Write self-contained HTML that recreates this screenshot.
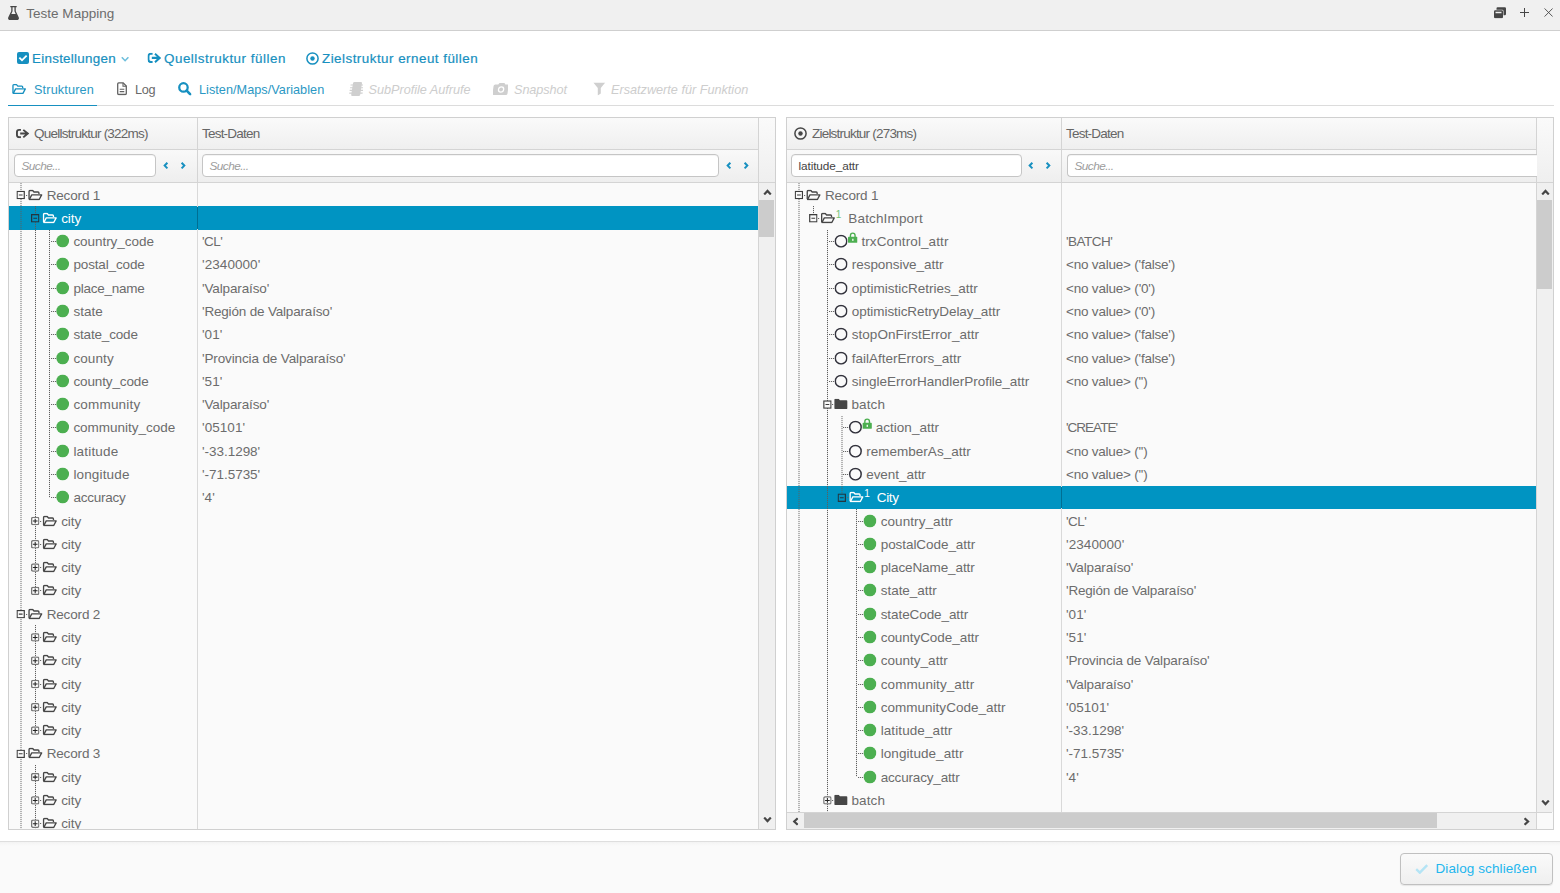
<!DOCTYPE html>
<html lang="de"><head><meta charset="utf-8"><title>Teste Mapping</title>
<style>
html,body{margin:0;padding:0}
body{width:1560px;height:893px;overflow:hidden;background:#fff;position:relative;font-family:"Liberation Sans",sans-serif;font-size:13.5px;color:#666}
.t{position:absolute;white-space:pre;line-height:18px}
.i{position:absolute;overflow:visible;fill:currentColor;color:#464646}
.i.blue{color:#1790c0}.i.lblue{color:#6fbfdc;--sw:1.600}.i.dark{color:#464646}.i.dis{color:#cfcfcf}.i.green{color:#4caf50}.i.w{color:#fff}.i.lblue2{color:#b4e4f5}
.blue{color:#1790c0}
#titlebar{position:absolute;left:0;top:0;width:1560px;height:30px;background:#f0f0f0;border-bottom:1px solid #cfcfcf}
.title{font-size:13.5px;color:#6c6c6c}
.tb{font-size:13.4px;color:#1790c0;-webkit-text-stroke:.2px #1790c0}
.tab{font-size:12.7px;color:#6a6a6a}
.tab.blue{color:#2b98c4}
.tab.dis{color:#cdcdcd;font-style:italic}
#tabline{position:absolute;left:8px;top:105px;width:1546px;height:1px;background:#dcdcdc}
#tabactive{position:absolute;left:8px;top:105px;width:89px;height:1px;background:#1790c0}
.panel{position:absolute;top:117px;height:711px;border:1px solid #d0d0d0;background:#fafafa;overflow:hidden}
.hdr{position:absolute;top:0;height:31px;background:linear-gradient(#fafafa,#efefef);border-bottom:1px solid #d4d4d4}
.hdrcorner{position:absolute;top:0;height:64px;background:linear-gradient(#fafafa,#efefef);border-left:1px solid #d4d4d4;border-bottom:1px solid #d4d4d4;box-sizing:border-box;height:65px}
.filt{position:absolute;top:32px;height:32px;background:linear-gradient(#f9f9f9,#eee);border-bottom:1px solid #d4d4d4}
.hd{font-size:13.5px;color:#666}
.inp{position:absolute;height:21px;border:1px solid #c5c5c5;border-radius:4px;background:#fff;box-shadow:inset 0 1px 0 #f4f4f4}
.inp span{position:absolute;left:6.5px;top:3px;font-size:11.8px;line-height:16px;white-space:pre}
.inp .ph{font-style:italic;color:#9c9c9c;letter-spacing:-.55px}
.inp .val{color:#444;letter-spacing:-.1px}
.body{position:absolute;background:#fafafa;overflow:hidden}
.sel{position:absolute;left:0;right:0;background:#0094c2}
.cdiv{position:absolute;top:0;bottom:0;width:1px;background:#d9d9d9}
.hdiv{position:absolute;top:0;height:64px;width:1px;background:#d4d4d4}
.seldiv{position:absolute;width:1px;background:#006f93}
.vl{position:absolute;width:1px;background-image:linear-gradient(#5e5e5e 50%,rgba(85,85,85,.12) 50%);background-size:1px 2px}
.hl{position:absolute;height:1px;background-image:linear-gradient(90deg,#666 50%,rgba(85,85,85,.15) 50%);background-size:2px 1px}
.gc{position:absolute;width:13px;height:13px;border-radius:50%;background:#4caf50;transform:translateX(.5px)}
.oc{position:absolute;width:9.1px;height:9.1px;border-radius:50%;border:1.7px solid #3e3e3e}
.tr{font-size:13.5px;color:#6c6c6c}
.tr.w,.sup.w{color:#fff}
.sup{font-size:10px;color:#74c277;line-height:12px}
.vsb{position:absolute;background:#f0f0f0;border-left:1px solid #d4d4d4}
.hsb{position:absolute;background:#f0f0f0;border-top:1px solid #d4d4d4;box-sizing:border-box}
.hsbcorner{position:absolute;background:#fafafa;border-left:1px solid #d4d4d4;border-top:1px solid #d4d4d4;box-sizing:border-box}
.thumb{position:absolute;background:#cccccc}
#footer{position:absolute;left:0;top:841px;width:1560px;height:52px;background:linear-gradient(#f3f3f3,#fafafa 4px);border-top:1px solid #dedede;box-sizing:border-box}
#btn{position:absolute;left:1400px;top:11px;width:151px;height:30px;border:1px solid #c0c0c0;border-radius:4px;background:linear-gradient(#fafafa,#efefef);box-shadow:0 1px 1px rgba(0,0,0,.08)}
.btnt{font-size:13.5px;color:#22b6ee}
.i.exp{color:#3c3c3c}
.i.exp.w{color:#233640;--bg:#0094c2}
.vl2{width:2px;opacity:.45}
.i.oc2{color:#33333d}
.hl2{position:absolute;height:1px;background:#7a7a7a}
.i.grey{color:#626262}

</style></head>
<body>
<svg width="0" height="0" style="position:absolute">
<symbol id="flask" viewBox="0 0 11 14"><path d="M2.300.6h6.400M3.900.6v4.600L.9 11.600c-.4 1 .1 1.800 1.100 1.800h7c1 0 1.500-.8 1.100-1.800L7.100 5.200V.6" stroke="currentColor" stroke-width="1.300" fill="none"/><path d="M2.600 8h5.800l1.800 4.200c.2.600-.1 1.200-.8 1.200H1.600c-.7 0-1-.6-.8-1.200z"/></symbol>
<symbol id="restore" viewBox="0 0 12 11"><path d="M3.500 0h7.300Q12 0 12 1.200v5.600Q12 8 10.800 8H9.500V3.800Q9.500 2.500 8.200 2.500H2.500V1.200Q2.500 0 3.500 0z"/><path d="M1.200 3h6.600Q9 3 9 4.200v5.600Q9 11 7.800 11H1.200Q0 11 0 9.800V4.200Q0 3 1.200 3zM1.500 4.600v1.300h6V4.600z" fill-rule="evenodd"/></symbol>
<symbol id="plus" viewBox="0 0 9 9"><path d="M4.500 0v9M0 4.500h9" stroke="currentColor" stroke-width="1" fill="none"/></symbol>
<symbol id="xclose" viewBox="0 0 10 10"><path d="M.5.5l9 9M9.500.5l-9 9" stroke="currentColor" stroke-width="1" fill="none"/></symbol>
<symbol id="checksq" viewBox="0 0 12 12"><path d="M2 0h8a2 2 0 0 1 2 2v8a2 2 0 0 1-2 2H2a2 2 0 0 1-2-2V2a2 2 0 0 1 2-2zM5 9.600l5.300-5.300-1.300-1.300L5 7 3 5 1.700 6.300z" fill-rule="evenodd"/></symbol>
<symbol id="angledown" viewBox="0 0 9 6"><path d="M1.200.6l3.300 3.500L7.800.6" stroke="currentColor" stroke-width="var(--sw,2.200)" fill="none"/></symbol>
<symbol id="angleup" viewBox="0 0 9 6"><path d="M1.200 5.400l3.300-3.500 3.300 3.500" stroke="currentColor" stroke-width="2.200" fill="none"/></symbol>
<symbol id="anglel" viewBox="0 0 6 9"><path d="M5.400 1.200L1.900 4.500l3.500 3.300" stroke="currentColor" stroke-width="2.200" fill="none"/></symbol>
<symbol id="angler" viewBox="0 0 6 9"><path d="M.6 1.200l3.500 3.300L.6 7.800" stroke="currentColor" stroke-width="2.200" fill="none"/></symbol>
<symbol id="chevl" viewBox="0 0 6 9"><path d="M5 1.200L1.800 4.500 5 7.800" stroke="currentColor" stroke-width="2.400" fill="none"/></symbol>
<symbol id="chevr" viewBox="0 0 6 9"><path d="M1 1.200l3.200 3.300L1 7.800" stroke="currentColor" stroke-width="2.400" fill="none"/></symbol>
<symbol id="signout" viewBox="0 0 14 10" preserveAspectRatio="none"><path d="M5.200 1H3.400Q1 1 1 3.400v3.200Q1 9 3.400 9H5.200" stroke="currentColor" stroke-width="2" fill="none"/><path d="M8.300.2L14 5 8.300 9.800 7 8.400 9.600 6.100H4.400V3.900H9.600L7 1.600z"/></symbol>
<symbol id="dotcircle" viewBox="0 0 13 13"><circle cx="6.500" cy="6.500" r="5.600" stroke="currentColor" stroke-width="1.500" fill="none"/><circle cx="6.500" cy="6.500" r="2.200"/></symbol>
<symbol id="folderopen" viewBox="0 0 16 12"><path d="M1 10.500V2Q1 1 2 1h3l1.500 1.700H11q1 0 1 1V5" stroke="currentColor" stroke-width="1.500" fill="none" stroke-linejoin="round"/><path d="M1.300 11L4 5.800h11L12.300 11z" stroke="currentColor" stroke-width="1.500" fill="none" stroke-linejoin="round"/></symbol>
<symbol id="foldersolid" viewBox="0 0 14 11"><path d="M1 0h3.600L6 1.500h6.800Q14 1.500 14 2.700v7.100Q14 11 12.800 11H1.200Q0 11 0 9.800V1Q0 0 1 0z"/></symbol>
<symbol id="filetext" viewBox="0 0 10 13"><path d="M1.700.7h4.500l3.100 3.100v7.500q0 1-1 1H1.700q-1 0-1-1V1.700q0-1 1-1z" stroke="currentColor" stroke-width="1.300" fill="none"/><path d="M6 .7v3.300h3.300M2.700 7h4.600M2.700 9.400h4.600" stroke="currentColor" stroke-width="1.100" fill="none"/></symbol>
<symbol id="search" viewBox="0 0 13 13"><circle cx="5.300" cy="5.300" r="4.100" stroke="currentColor" stroke-width="2.200" fill="none"/><path d="M8.400 8.400l3.600 3.600" stroke="currentColor" stroke-width="2.600" stroke-linecap="round"/></symbol>
<symbol id="chip" viewBox="0 0 15 14"><g transform="skewX(-9) translate(2.200 0)"><rect x="3" y="0" width="9" height="14" rx="1.300"/><path d="M.8 3h13.400M.8 5.700h13.400M.8 8.400h13.400M.8 11.100h13.400" stroke="currentColor" stroke-width="1.100"/></g></symbol>
<symbol id="camera" viewBox="0 0 15 12"><g transform="skewX(-8) translate(1 0)"><path d="M2.200 1.500h2.300L5.500 0h5l1 1.500h2Q15 1.500 15 3v7.500Q15 12 13.500 12h-12Q0 12 0 10.500V3Q0 1.500 1.500 1.500zM8 3.300a3.200 3.200 0 1 0 0 6.400 3.200 3.200 0 0 0 0-6.400z" fill-rule="evenodd"/><circle cx="8" cy="6.500" r="1.900"/></g></symbol>
<symbol id="filter" viewBox="0 0 12 13"><path d="M0 0h12L7.500 5.500V11l-3 2V5.500z"/></symbol>
<symbol id="minus" viewBox="0 0 9 9"><rect x=".6" y=".6" width="7.800" height="7.800" stroke="currentColor" stroke-width="1.400" fill="var(--bg,#fafafa)"/><path d="M2.500 4.500h4" stroke="currentColor" stroke-width="1.100"/></symbol>
<symbol id="plusbox" viewBox="0 0 9 9"><rect x=".6" y=".6" width="7.800" height="7.800" rx="1.700" stroke="#777" stroke-width="1.500" fill="#fafafa"/><path d="M2 4.500h5M4.500 2v5" stroke="#222" stroke-width="1.100"/></symbol>
<symbol id="lock" viewBox="0 0 9 10"><path d="M2.300 4.500V3a2.200 2.200 0 0 1 4.400 0v1.500" stroke="currentColor" stroke-width="1.300" fill="none"/><rect x="0" y="4.300" width="9" height="5.700" rx=".8"/><rect x="4" y="6.200" width="1.200" height="2" fill="#fff"/></symbol>
<symbol id="check" viewBox="0 0 13 10"><path d="M1 5.200l3.600 3.500L12 1.200" stroke="currentColor" stroke-width="2.400" fill="none"/></symbol>
<symbol id="circleo" viewBox="0 0 13 13"><circle cx="6.500" cy="6.500" r="5.700" stroke="currentColor" stroke-width="1.500" fill="none"/></symbol>
<symbol id="gcirc" viewBox="0 0 13 13"><circle cx="6.500" cy="6.500" r="6.500"/></symbol>
</svg>
<div id="titlebar"><svg class="i " style="left:8px;top:6px;width:11px;height:14px"><use href="#flask"/></svg><span class="t title" style="left:26.3px;top:4.5px;letter-spacing:0.01px">Teste Mapping</span><svg class="i " style="left:1494px;top:7px;width:12px;height:11.5px"><use href="#restore"/></svg><svg class="i " style="left:1520px;top:8px;width:9px;height:9px"><use href="#plus"/></svg><svg class="i " style="left:1544px;top:8px;width:9px;height:9px;transform:translate(0.1px,0px)"><use href="#xclose"/></svg></div>
<div id="toolbar"><svg class="i blue" style="left:17px;top:52px;width:12px;height:12px"><use href="#checksq"/></svg><span class="t tb" style="left:32px;top:49.6px;letter-spacing:0.27px">Einstellungen</span><svg class="i lblue" style="left:120px;top:56px;width:9px;height:6px;transform:translate(0.6px,0.6px)"><use href="#angledown"/></svg><svg class="i blue" style="left:147px;top:52px;width:13.7px;height:10.3px;transform:translate(0.5px,0.8px)"><use href="#signout"/></svg><span class="t tb" style="left:164px;top:49.6px;letter-spacing:0.51px">Quellstruktur füllen</span><svg class="i blue" style="left:306px;top:52px;width:13px;height:13px"><use href="#dotcircle"/></svg><span class="t tb" style="left:322px;top:49.6px;letter-spacing:0.48px">Zielstruktur erneut füllen</span></div>
<div id="tabs"><svg class="i blue" style="left:11px;top:83px;width:15.3px;height:10.6px;transform:translate(0.5px,0.7px)"><use href="#folderopen"/></svg><span class="t tab blue" style="left:34px;top:81px;letter-spacing:0.14px">Strukturen</span><svg class="i grey" style="left:117px;top:82px;width:10px;height:13.4px"><use href="#filetext"/></svg><span class="t tab" style="left:135px;top:81px;letter-spacing:-0.31px">Log</span><svg class="i blue" style="left:178px;top:82px;width:13.4px;height:13.4px"><use href="#search"/></svg><span class="t tab blue" style="left:199px;top:81px;letter-spacing:0.03px">Listen/Maps/Variablen</span><svg class="i dis" style="left:348px;top:82px;width:15px;height:14px"><use href="#chip"/></svg><span class="t tab dis" style="left:368.5px;top:81px;letter-spacing:-0.02px">SubProfile Aufrufe</span><svg class="i dis" style="left:493px;top:83px;width:15px;height:12px"><use href="#camera"/></svg><span class="t tab dis" style="left:514px;top:81px;letter-spacing:-0.08px">Snapshot</span><svg class="i dis" style="left:592px;top:82px;width:13.4px;height:13px;transform:translate(0.6px,0.6px)"><use href="#filter"/></svg><span class="t tab dis" style="left:611px;top:81px;letter-spacing:-0.01px">Ersatzwerte für Funktion</span><div id="tabline"></div><div id="tabactive"></div></div>
<div class="panel" id="pl" style="left:8px;width:766px"><div class="hdr" style="left:0;width:749px"></div><div class="hdrcorner" style="left:749px;width:17px"></div><div class="filt" style="left:0;width:749px"></div><div class="hdiv" style="left:188px"></div><svg class="i dark" style="left:7px;top:11px;width:13.3px;height:9.2px"><use href="#signout"/></svg><span class="t hd" style="left:25px;top:7px;letter-spacing:-0.76px">Quellstruktur (322ms)</span><span class="t hd" style="left:193px;top:7px;letter-spacing:-0.79px">Test-Daten</span><div class="inp" style="left:5px;top:36px;width:140px"><span class="ph">Suche...</span></div><svg class="i blue" style="left:154px;top:43px;width:5.4px;height:7.6px;transform:translate(0px,0.8px)"><use href="#chevl"/></svg><svg class="i blue" style="left:171px;top:43px;width:5.4px;height:7.6px;transform:translate(0.6px,0.8px)"><use href="#chevr"/></svg><div class="inp" style="left:193px;top:36px;width:515px;"><span class="ph">Suche...</span></div><svg class="i blue" style="left:717px;top:43px;width:5.4px;height:7.6px;transform:translate(0px,0.8px)"><use href="#chevl"/></svg><svg class="i blue" style="left:734px;top:43px;width:5.4px;height:7.6px;transform:translate(0.6px,0.8px)"><use href="#chevr"/></svg><div class="body" style="left:0;top:65px;width:749px;height:646px"><div class="sel" style="top:23px;height:24px"></div><div class="cdiv" style="left:188px"></div><div class="seldiv" style="left:188px;top:24px;height:22px"></div><div class="vl vl2" style="left:11px;top:0px;height:652px"></div><div class="vl" style="left:26px;top:23px;height:385px"></div><div class="vl" style="left:26px;top:442px;height:106px"></div><div class="vl" style="left:26px;top:582px;height:70px"></div><div class="vl" style="left:40px;top:47px;height:268px"></div><svg class="i exp" style="left:7px;top:7px;width:8.4px;height:8.4px;transform:translate(0.5px,0.8px)"><use href="#minus"/></svg><div class="hl" style="left:16.7px;top:12px;width:2px"></div><svg class="i dark" style="left:18px;top:6px;width:15.3px;height:10.8px;transform:translate(0.7px,0.6px)"><use href="#folderopen"/></svg><span class="t tr" style="left:37.7px;top:3.5px;letter-spacing:-0.16px">Record 1</span><svg class="i exp w" style="left:22px;top:31px;width:8.4px;height:8.4px;transform:translate(0.0px,0.09px)"><use href="#minus"/></svg><div class="hl" style="left:31.200000000000003px;top:35px;width:2px"></div><svg class="i dark w" style="left:33px;top:29px;width:15.3px;height:10.8px;transform:translate(0.2px,0.6px)"><use href="#folderopen"/></svg><span class="t tr w" style="left:52.2px;top:26.5px;letter-spacing:-0.09px">city</span><div class="hl" style="left:42px;top:58px;width:6px"></div><svg class="i green" style="left:47px;top:51px;width:12.9px;height:12.9px;transform:translate(0.2px,0.5px)"><use href="#gcirc"/></svg><span class="t tr" style="left:64.4px;top:49.5px;letter-spacing:-0.05px">country_code</span><span class="t tr" style="left:193px;top:49.5px;letter-spacing:-0.55px">'CL'</span><div class="hl" style="left:42px;top:81px;width:6px"></div><svg class="i green" style="left:47px;top:74px;width:12.9px;height:12.9px;transform:translate(0.2px,0.5px)"><use href="#gcirc"/></svg><span class="t tr" style="left:64.4px;top:72.5px;letter-spacing:-0.14px">postal_code</span><span class="t tr" style="left:193px;top:72.5px;letter-spacing:0.07px">'2340000'</span><div class="hl" style="left:42px;top:105px;width:6px"></div><svg class="i green" style="left:47px;top:98px;width:12.9px;height:12.9px;transform:translate(0.2px,0.5px)"><use href="#gcirc"/></svg><span class="t tr" style="left:64.4px;top:96.5px;letter-spacing:-0.25px">place_name</span><span class="t tr" style="left:193px;top:96.5px;letter-spacing:-0.13px">'Valparaíso'</span><div class="hl" style="left:42px;top:128px;width:6px"></div><svg class="i green" style="left:47px;top:121px;width:12.9px;height:12.9px;transform:translate(0.2px,0.5px)"><use href="#gcirc"/></svg><span class="t tr" style="left:64.4px;top:119.5px;letter-spacing:0.04px">state</span><span class="t tr" style="left:193px;top:119.5px;letter-spacing:-0.18px">'Región de Valparaíso'</span><div class="hl" style="left:42px;top:151px;width:6px"></div><svg class="i green" style="left:47px;top:144px;width:12.9px;height:12.9px;transform:translate(0.2px,0.5px)"><use href="#gcirc"/></svg><span class="t tr" style="left:64.4px;top:142.5px;letter-spacing:-0.17px">state_code</span><span class="t tr" style="left:193px;top:142.5px;letter-spacing:0.04px">'01'</span><div class="hl" style="left:42px;top:175px;width:6px"></div><svg class="i green" style="left:47px;top:168px;width:12.9px;height:12.9px;transform:translate(0.2px,0.5px)"><use href="#gcirc"/></svg><span class="t tr" style="left:64.4px;top:166.5px;letter-spacing:0.11px">county</span><span class="t tr" style="left:193px;top:166.5px;letter-spacing:-0.13px">'Provincia de Valparaíso'</span><div class="hl" style="left:42px;top:198px;width:6px"></div><svg class="i green" style="left:47px;top:191px;width:12.9px;height:12.9px;transform:translate(0.2px,0.5px)"><use href="#gcirc"/></svg><span class="t tr" style="left:64.4px;top:189.5px;letter-spacing:-0.12px">county_code</span><span class="t tr" style="left:193px;top:189.5px;letter-spacing:0.04px">'51'</span><div class="hl" style="left:42px;top:221px;width:6px"></div><svg class="i green" style="left:47px;top:214px;width:12.9px;height:12.9px;transform:translate(0.2px,0.5px)"><use href="#gcirc"/></svg><span class="t tr" style="left:64.4px;top:212.5px;letter-spacing:0.19px">community</span><span class="t tr" style="left:193px;top:212.5px;letter-spacing:-0.13px">'Valparaíso'</span><div class="hl" style="left:42px;top:244px;width:6px"></div><svg class="i green" style="left:47px;top:237px;width:12.9px;height:12.9px;transform:translate(0.2px,0.5px)"><use href="#gcirc"/></svg><span class="t tr" style="left:64.4px;top:235.5px;letter-spacing:-0.02px">community_code</span><span class="t tr" style="left:193px;top:235.5px;letter-spacing:0.06px">'05101'</span><div class="hl" style="left:42px;top:268px;width:6px"></div><svg class="i green" style="left:47px;top:261px;width:12.9px;height:12.9px;transform:translate(0.2px,0.5px)"><use href="#gcirc"/></svg><span class="t tr" style="left:64.4px;top:259.5px;letter-spacing:0.19px">latitude</span><span class="t tr" style="left:193px;top:259.5px;letter-spacing:-0.03px">'-33.1298'</span><div class="hl" style="left:42px;top:291px;width:6px"></div><svg class="i green" style="left:47px;top:284px;width:12.9px;height:12.9px;transform:translate(0.2px,0.5px)"><use href="#gcirc"/></svg><span class="t tr" style="left:64.4px;top:282.5px;letter-spacing:0.15px">longitude</span><span class="t tr" style="left:193px;top:282.5px;letter-spacing:-0.03px">'-71.5735'</span><div class="hl" style="left:42px;top:314px;width:6px"></div><svg class="i green" style="left:47px;top:307px;width:12.9px;height:12.9px;transform:translate(0.2px,0.5px)"><use href="#gcirc"/></svg><span class="t tr" style="left:64.4px;top:305.5px;letter-spacing:-0.22px">accuracy</span><span class="t tr" style="left:193px;top:305.5px;letter-spacing:0.02px">'4'</span><svg class="i exp" style="left:22px;top:333px;width:8.4px;height:8.4px;transform:translate(0.0px,0.8px)"><use href="#plusbox"/></svg><div class="hl" style="left:31.200000000000003px;top:338px;width:2px"></div><svg class="i dark" style="left:33px;top:332px;width:15.3px;height:10.8px;transform:translate(0.2px,0.6px)"><use href="#folderopen"/></svg><span class="t tr" style="left:52.2px;top:329.5px;letter-spacing:-0.09px">city</span><svg class="i exp" style="left:22px;top:357px;width:8.4px;height:8.4px;transform:translate(0.0px,0.09px)"><use href="#plusbox"/></svg><div class="hl" style="left:31.200000000000003px;top:361px;width:2px"></div><svg class="i dark" style="left:33px;top:355px;width:15.3px;height:10.8px;transform:translate(0.2px,0.6px)"><use href="#folderopen"/></svg><span class="t tr" style="left:52.2px;top:352.5px;letter-spacing:-0.09px">city</span><svg class="i exp" style="left:22px;top:380px;width:8.4px;height:8.4px;transform:translate(0.0px,0.37px)"><use href="#plusbox"/></svg><div class="hl" style="left:31.200000000000003px;top:384px;width:2px"></div><svg class="i dark" style="left:33px;top:378px;width:15.3px;height:10.8px;transform:translate(0.2px,0.6px)"><use href="#folderopen"/></svg><span class="t tr" style="left:52.2px;top:375.5px;letter-spacing:-0.09px">city</span><svg class="i exp" style="left:22px;top:403px;width:8.4px;height:8.4px;transform:translate(0.0px,0.66px)"><use href="#plusbox"/></svg><div class="hl" style="left:31.200000000000003px;top:407px;width:2px"></div><svg class="i dark" style="left:33px;top:401px;width:15.3px;height:10.8px;transform:translate(0.2px,0.6px)"><use href="#folderopen"/></svg><span class="t tr" style="left:52.2px;top:398.5px;letter-spacing:-0.09px">city</span><svg class="i exp" style="left:7px;top:426px;width:8.4px;height:8.4px;transform:translate(0.5px,0.94px)"><use href="#minus"/></svg><div class="hl" style="left:16.7px;top:431px;width:2px"></div><svg class="i dark" style="left:18px;top:425px;width:15.3px;height:10.8px;transform:translate(0.7px,0.6px)"><use href="#folderopen"/></svg><span class="t tr" style="left:37.7px;top:422.5px;letter-spacing:-0.16px">Record 2</span><svg class="i exp" style="left:22px;top:450px;width:8.4px;height:8.4px;transform:translate(0.0px,0.23px)"><use href="#plusbox"/></svg><div class="hl" style="left:31.200000000000003px;top:454px;width:2px"></div><svg class="i dark" style="left:33px;top:448px;width:15.3px;height:10.8px;transform:translate(0.2px,0.6px)"><use href="#folderopen"/></svg><span class="t tr" style="left:52.2px;top:445.5px;letter-spacing:-0.09px">city</span><svg class="i exp" style="left:22px;top:473px;width:8.4px;height:8.4px;transform:translate(0.0px,0.51px)"><use href="#plusbox"/></svg><div class="hl" style="left:31.200000000000003px;top:477px;width:2px"></div><svg class="i dark" style="left:33px;top:471px;width:15.3px;height:10.8px;transform:translate(0.2px,0.6px)"><use href="#folderopen"/></svg><span class="t tr" style="left:52.2px;top:468.5px;letter-spacing:-0.09px">city</span><svg class="i exp" style="left:22px;top:496px;width:8.4px;height:8.4px;transform:translate(0.0px,0.8px)"><use href="#plusbox"/></svg><div class="hl" style="left:31.200000000000003px;top:501px;width:2px"></div><svg class="i dark" style="left:33px;top:495px;width:15.3px;height:10.8px;transform:translate(0.2px,0.6px)"><use href="#folderopen"/></svg><span class="t tr" style="left:52.2px;top:492.5px;letter-spacing:-0.09px">city</span><svg class="i exp" style="left:22px;top:520px;width:8.4px;height:8.4px;transform:translate(0.0px,0.09px)"><use href="#plusbox"/></svg><div class="hl" style="left:31.200000000000003px;top:524px;width:2px"></div><svg class="i dark" style="left:33px;top:518px;width:15.3px;height:10.8px;transform:translate(0.2px,0.6px)"><use href="#folderopen"/></svg><span class="t tr" style="left:52.2px;top:515.5px;letter-spacing:-0.09px">city</span><svg class="i exp" style="left:22px;top:543px;width:8.4px;height:8.4px;transform:translate(0.0px,0.37px)"><use href="#plusbox"/></svg><div class="hl" style="left:31.200000000000003px;top:547px;width:2px"></div><svg class="i dark" style="left:33px;top:541px;width:15.3px;height:10.8px;transform:translate(0.2px,0.6px)"><use href="#folderopen"/></svg><span class="t tr" style="left:52.2px;top:538.5px;letter-spacing:-0.09px">city</span><svg class="i exp" style="left:7px;top:566px;width:8.4px;height:8.4px;transform:translate(0.5px,0.66px)"><use href="#minus"/></svg><div class="hl" style="left:16.7px;top:570px;width:2px"></div><svg class="i dark" style="left:18px;top:564px;width:15.3px;height:10.8px;transform:translate(0.7px,0.6px)"><use href="#folderopen"/></svg><span class="t tr" style="left:37.7px;top:561.5px;letter-spacing:-0.16px">Record 3</span><svg class="i exp" style="left:22px;top:589px;width:8.4px;height:8.4px;transform:translate(0.0px,0.94px)"><use href="#plusbox"/></svg><div class="hl" style="left:31.200000000000003px;top:594px;width:2px"></div><svg class="i dark" style="left:33px;top:588px;width:15.3px;height:10.8px;transform:translate(0.2px,0.6px)"><use href="#folderopen"/></svg><span class="t tr" style="left:52.2px;top:585.5px;letter-spacing:-0.09px">city</span><svg class="i exp" style="left:22px;top:613px;width:8.4px;height:8.4px;transform:translate(0.0px,0.23px)"><use href="#plusbox"/></svg><div class="hl" style="left:31.200000000000003px;top:617px;width:2px"></div><svg class="i dark" style="left:33px;top:611px;width:15.3px;height:10.8px;transform:translate(0.2px,0.6px)"><use href="#folderopen"/></svg><span class="t tr" style="left:52.2px;top:608.5px;letter-spacing:-0.09px">city</span><svg class="i exp" style="left:22px;top:636px;width:8.4px;height:8.4px;transform:translate(0.0px,0.51px)"><use href="#plusbox"/></svg><div class="hl" style="left:31.200000000000003px;top:640px;width:2px"></div><svg class="i dark" style="left:33px;top:634px;width:15.3px;height:10.8px;transform:translate(0.2px,0.6px)"><use href="#folderopen"/></svg><span class="t tr" style="left:52.2px;top:631.5px;letter-spacing:-0.09px">city</span></div><div class="vsb" style="left:749px;top:65px;width:16px;height:646px"><svg class="i dark" style="left:4px;top:6px;width:9px;height:6px"><use href="#angleup"/></svg><svg class="i dark" style="left:4px;top:634px;width:9px;height:6px"><use href="#angledown"/></svg><div class="thumb" style="left:0;top:17px;width:15px;height:37px"></div></div></div>
<div class="panel" id="pr" style="left:786px;width:766px"><div class="hdr" style="left:0;width:749px"></div><div class="hdrcorner" style="left:749px;width:17px"></div><div class="filt" style="left:0;width:749px"></div><div class="hdiv" style="left:274px"></div><svg class="i dark" style="left:7px;top:9px;width:13px;height:13px"><use href="#dotcircle"/></svg><span class="t hd" style="left:25px;top:7px;letter-spacing:-0.79px">Zielstruktur (273ms)</span><span class="t hd" style="left:279px;top:7px;letter-spacing:-0.79px">Test-Daten</span><div class="inp" style="left:4px;top:36px;width:229px"><span class="val">latitude_attr</span></div><svg class="i blue" style="left:241px;top:43px;width:5.4px;height:7.6px;transform:translate(0px,0.8px)"><use href="#chevl"/></svg><svg class="i blue" style="left:258px;top:43px;width:5.4px;height:7.6px;transform:translate(0.6px,0.8px)"><use href="#chevr"/></svg><div class="inp" style="left:280px;top:36px;width:469px;border-right:none;border-radius:4px 0 0 4px;"><span class="ph">Suche...</span></div><div class="body" style="left:0;top:65px;width:749px;height:629px"><div class="sel" style="top:303px;height:23px"></div><div class="cdiv" style="left:274px"></div><div class="seldiv" style="left:274px;top:304px;height:21px"></div><div class="vl vl2" style="left:11px;top:0px;height:652px"></div><div class="vl" style="left:26px;top:23px;height:8px"></div><div class="vl" style="left:40px;top:47px;height:605px"></div><div class="vl vl2" style="left:54px;top:233px;height:78px"></div><div class="vl" style="left:69px;top:326px;height:268px"></div><svg class="i exp" style="left:7px;top:7px;width:8.4px;height:8.4px;transform:translate(0.7px,0.8px)"><use href="#minus"/></svg><div class="hl" style="left:16.899999999999977px;top:12px;width:2px"></div><svg class="i dark" style="left:18px;top:6px;width:15.3px;height:10.8px;transform:translate(0.9px,0.6px)"><use href="#folderopen"/></svg><span class="t tr" style="left:37.89999999999998px;top:3.5px;letter-spacing:-0.16px">Record 1</span><svg class="i exp" style="left:22px;top:31px;width:8.4px;height:8.4px;transform:translate(0.1px,0.09px)"><use href="#minus"/></svg><div class="hl" style="left:31.299999999999955px;top:35px;width:2px"></div><svg class="i dark" style="left:33px;top:29px;width:15.3px;height:10.8px;transform:translate(0.3px,0.6px)"><use href="#folderopen"/></svg><span class="t sup" style="left:48.799999999999955px;top:26.4px">1</span><span class="t tr" style="left:61.299999999999955px;top:26.5px;letter-spacing:0.16px">BatchImport</span><div class="hl" style="left:42px;top:58px;width:6px"></div><svg class="i oc2" style="left:47px;top:51px;width:13.1px;height:13.1px;transform:translate(0.5px,0.6px)"><use href="#circleo"/></svg><svg class="i green" style="left:60px;top:49px;width:9.5px;height:11px;transform:translate(1.0px,0px)"><use href="#lock"/></svg><span class="t tr" style="left:74.39999999999998px;top:49.5px;letter-spacing:0.11px">trxControl_attr</span><span class="t tr" style="left:279px;top:49.5px;letter-spacing:-0.52px">'BATCH'</span><div class="hl" style="left:42px;top:81px;width:6px"></div><svg class="i oc2" style="left:47px;top:74px;width:13.1px;height:13.1px;transform:translate(0.5px,0.6px)"><use href="#circleo"/></svg><span class="t tr" style="left:64.79999999999998px;top:72.5px;letter-spacing:-0.05px">responsive_attr</span><span class="t tr" style="left:279px;top:72.5px;letter-spacing:-0.21px">&lt;no value&gt; ('false')</span><div class="hl" style="left:42px;top:105px;width:6px"></div><svg class="i oc2" style="left:47px;top:98px;width:13.1px;height:13.1px;transform:translate(0.5px,0.6px)"><use href="#circleo"/></svg><span class="t tr" style="left:64.79999999999998px;top:96.5px;letter-spacing:-0.00px">optimisticRetries_attr</span><span class="t tr" style="left:279px;top:96.5px;letter-spacing:-0.20px">&lt;no value&gt; ('0')</span><div class="hl" style="left:42px;top:128px;width:6px"></div><svg class="i oc2" style="left:47px;top:121px;width:13.1px;height:13.1px;transform:translate(0.5px,0.6px)"><use href="#circleo"/></svg><span class="t tr" style="left:64.79999999999998px;top:119.5px;letter-spacing:-0.07px">optimisticRetryDelay_attr</span><span class="t tr" style="left:279px;top:119.5px;letter-spacing:-0.20px">&lt;no value&gt; ('0')</span><div class="hl" style="left:42px;top:151px;width:6px"></div><svg class="i oc2" style="left:47px;top:144px;width:13.1px;height:13.1px;transform:translate(0.5px,0.6px)"><use href="#circleo"/></svg><span class="t tr" style="left:64.79999999999998px;top:142.5px;letter-spacing:0.02px">stopOnFirstError_attr</span><span class="t tr" style="left:279px;top:142.5px;letter-spacing:-0.21px">&lt;no value&gt; ('false')</span><div class="hl" style="left:42px;top:175px;width:6px"></div><svg class="i oc2" style="left:47px;top:168px;width:13.1px;height:13.1px;transform:translate(0.5px,0.6px)"><use href="#circleo"/></svg><span class="t tr" style="left:64.79999999999998px;top:166.5px;letter-spacing:0.00px">failAfterErrors_attr</span><span class="t tr" style="left:279px;top:166.5px;letter-spacing:-0.21px">&lt;no value&gt; ('false')</span><div class="hl" style="left:42px;top:198px;width:6px"></div><svg class="i oc2" style="left:47px;top:191px;width:13.1px;height:13.1px;transform:translate(0.5px,0.6px)"><use href="#circleo"/></svg><span class="t tr" style="left:64.79999999999998px;top:189.5px;letter-spacing:-0.01px">singleErrorHandlerProfile_attr</span><span class="t tr" style="left:279px;top:189.5px;letter-spacing:-0.22px">&lt;no value&gt; ('')</span><svg class="i exp" style="left:36px;top:217px;width:8.4px;height:8.4px;transform:translate(0.2px,0.37px)"><use href="#minus"/></svg><div class="hl" style="left:45.39999999999998px;top:221px;width:2px"></div><svg class="i dark" style="left:47px;top:215px;width:13.6px;height:10.3px;transform:translate(0.1px,0.8px)"><use href="#foldersolid"/></svg><span class="t tr" style="left:64.39999999999998px;top:212.5px;letter-spacing:0.12px">batch</span><div class="hl" style="left:56px;top:244px;width:6px"></div><svg class="i oc2" style="left:61px;top:237px;width:13.1px;height:13.1px;transform:translate(0.9px,0.6px)"><use href="#circleo"/></svg><svg class="i green" style="left:75px;top:235px;width:9.5px;height:11px;transform:translate(0.4px,0px)"><use href="#lock"/></svg><span class="t tr" style="left:88.79999999999995px;top:235.5px;letter-spacing:0.01px">action_attr</span><span class="t tr" style="left:279px;top:235.5px;letter-spacing:-0.99px">'CREATE'</span><div class="hl" style="left:56px;top:268px;width:6px"></div><svg class="i oc2" style="left:61px;top:261px;width:13.1px;height:13.1px;transform:translate(0.9px,0.6px)"><use href="#circleo"/></svg><span class="t tr" style="left:79.19999999999996px;top:259.5px;letter-spacing:0.02px">rememberAs_attr</span><span class="t tr" style="left:279px;top:259.5px;letter-spacing:-0.22px">&lt;no value&gt; ('')</span><div class="hl" style="left:56px;top:291px;width:6px"></div><svg class="i oc2" style="left:61px;top:284px;width:13.1px;height:13.1px;transform:translate(0.9px,0.6px)"><use href="#circleo"/></svg><span class="t tr" style="left:79.19999999999996px;top:282.5px;letter-spacing:-0.04px">event_attr</span><span class="t tr" style="left:279px;top:282.5px;letter-spacing:-0.22px">&lt;no value&gt; ('')</span><svg class="i exp w" style="left:50px;top:310px;width:8.4px;height:8.4px;transform:translate(0.6px,0.51px)"><use href="#minus"/></svg><div class="hl" style="left:59.799999999999955px;top:314px;width:2px"></div><svg class="i dark w" style="left:61px;top:308px;width:15.3px;height:10.8px;transform:translate(0.8px,0.6px)"><use href="#folderopen"/></svg><span class="t sup w" style="left:77.29999999999995px;top:305.4px">1</span><span class="t tr w" style="left:89.79999999999995px;top:305.5px;letter-spacing:-0.35px">City</span><div class="hl" style="left:71px;top:338px;width:6px"></div><svg class="i green" style="left:76px;top:331px;width:12.9px;height:12.9px;transform:translate(0.5px,0.5px)"><use href="#gcirc"/></svg><span class="t tr" style="left:93.69999999999996px;top:329.5px;letter-spacing:0.08px">country_attr</span><span class="t tr" style="left:279px;top:329.5px;letter-spacing:-0.55px">'CL'</span><div class="hl" style="left:71px;top:361px;width:6px"></div><svg class="i green" style="left:76px;top:354px;width:12.9px;height:12.9px;transform:translate(0.5px,0.5px)"><use href="#gcirc"/></svg><span class="t tr" style="left:93.69999999999996px;top:352.5px;letter-spacing:-0.06px">postalCode_attr</span><span class="t tr" style="left:279px;top:352.5px;letter-spacing:0.07px">'2340000'</span><div class="hl" style="left:71px;top:384px;width:6px"></div><svg class="i green" style="left:76px;top:377px;width:12.9px;height:12.9px;transform:translate(0.5px,0.5px)"><use href="#gcirc"/></svg><span class="t tr" style="left:93.69999999999996px;top:375.5px;letter-spacing:-0.10px">placeName_attr</span><span class="t tr" style="left:279px;top:375.5px;letter-spacing:-0.13px">'Valparaíso'</span><div class="hl" style="left:71px;top:407px;width:6px"></div><svg class="i green" style="left:76px;top:400px;width:12.9px;height:12.9px;transform:translate(0.5px,0.5px)"><use href="#gcirc"/></svg><span class="t tr" style="left:93.69999999999996px;top:398.5px;letter-spacing:-0.02px">state_attr</span><span class="t tr" style="left:279px;top:398.5px;letter-spacing:-0.18px">'Región de Valparaíso'</span><div class="hl" style="left:71px;top:431px;width:6px"></div><svg class="i green" style="left:76px;top:424px;width:12.9px;height:12.9px;transform:translate(0.5px,0.5px)"><use href="#gcirc"/></svg><span class="t tr" style="left:93.69999999999996px;top:422.5px;letter-spacing:-0.08px">stateCode_attr</span><span class="t tr" style="left:279px;top:422.5px;letter-spacing:0.04px">'01'</span><div class="hl" style="left:71px;top:454px;width:6px"></div><svg class="i green" style="left:76px;top:447px;width:12.9px;height:12.9px;transform:translate(0.5px,0.5px)"><use href="#gcirc"/></svg><span class="t tr" style="left:93.69999999999996px;top:445.5px;letter-spacing:-0.05px">countyCode_attr</span><span class="t tr" style="left:279px;top:445.5px;letter-spacing:0.04px">'51'</span><div class="hl" style="left:71px;top:477px;width:6px"></div><svg class="i green" style="left:76px;top:470px;width:12.9px;height:12.9px;transform:translate(0.5px,0.5px)"><use href="#gcirc"/></svg><span class="t tr" style="left:93.69999999999996px;top:468.5px;letter-spacing:0.02px">county_attr</span><span class="t tr" style="left:279px;top:468.5px;letter-spacing:-0.13px">'Provincia de Valparaíso'</span><div class="hl" style="left:71px;top:501px;width:6px"></div><svg class="i green" style="left:76px;top:494px;width:12.9px;height:12.9px;transform:translate(0.5px,0.5px)"><use href="#gcirc"/></svg><span class="t tr" style="left:93.69999999999996px;top:492.5px;letter-spacing:0.09px">community_attr</span><span class="t tr" style="left:279px;top:492.5px;letter-spacing:-0.13px">'Valparaíso'</span><div class="hl" style="left:71px;top:524px;width:6px"></div><svg class="i green" style="left:76px;top:517px;width:12.9px;height:12.9px;transform:translate(0.5px,0.5px)"><use href="#gcirc"/></svg><span class="t tr" style="left:93.69999999999996px;top:515.5px;letter-spacing:0.02px">communityCode_attr</span><span class="t tr" style="left:279px;top:515.5px;letter-spacing:0.06px">'05101'</span><div class="hl" style="left:71px;top:547px;width:6px"></div><svg class="i green" style="left:76px;top:540px;width:12.9px;height:12.9px;transform:translate(0.5px,0.5px)"><use href="#gcirc"/></svg><span class="t tr" style="left:93.69999999999996px;top:538.5px;letter-spacing:0.09px">latitude_attr</span><span class="t tr" style="left:279px;top:538.5px;letter-spacing:-0.03px">'-33.1298'</span><div class="hl" style="left:71px;top:570px;width:6px"></div><svg class="i green" style="left:76px;top:563px;width:12.9px;height:12.9px;transform:translate(0.5px,0.5px)"><use href="#gcirc"/></svg><span class="t tr" style="left:93.69999999999996px;top:561.5px;letter-spacing:0.07px">longitude_attr</span><span class="t tr" style="left:279px;top:561.5px;letter-spacing:-0.03px">'-71.5735'</span><div class="hl" style="left:71px;top:594px;width:6px"></div><svg class="i green" style="left:76px;top:587px;width:12.9px;height:12.9px;transform:translate(0.5px,0.5px)"><use href="#gcirc"/></svg><span class="t tr" style="left:93.69999999999996px;top:585.5px;letter-spacing:-0.17px">accuracy_attr</span><span class="t tr" style="left:279px;top:585.5px;letter-spacing:0.02px">'4'</span><svg class="i exp" style="left:36px;top:613px;width:8.4px;height:8.4px;transform:translate(0.2px,0.23px)"><use href="#plusbox"/></svg><div class="hl" style="left:45.39999999999998px;top:617px;width:2px"></div><svg class="i dark" style="left:47px;top:611px;width:13.6px;height:10.3px;transform:translate(0.1px,0.8px)"><use href="#foldersolid"/></svg><span class="t tr" style="left:64.39999999999998px;top:608.5px;letter-spacing:0.12px">batch</span></div><div class="vsb" style="left:749px;top:65px;width:16px;height:629px"><svg class="i dark" style="left:4px;top:6px;width:9px;height:6px"><use href="#angleup"/></svg><svg class="i dark" style="left:4px;top:617px;width:9px;height:6px"><use href="#angledown"/></svg><div class="thumb" style="left:0;top:17px;width:15px;height:89px"></div></div><div class="hsb" style="left:0;top:694px;width:749px;height:17px"><svg class="i dark" style="left:5px;top:4px;width:6px;height:9px;transform:translate(0.3px,0px)"><use href="#anglel"/></svg><svg class="i dark" style="left:737px;top:4px;width:6px;height:9px"><use href="#angler"/></svg><div class="thumb" style="left:17px;top:0;width:633px;height:15px"></div></div><div class="hsbcorner" style="left:749px;top:694px;width:16px;height:17px"></div></div>
<div id="footer"><div id="btn"><svg class="i lblue2" style="left:14px;top:10px;width:13px;height:10px;transform:translate(0.2px,0px)"><use href="#check"/></svg><span class="t btnt" style="left:34.5px;top:6.3px;letter-spacing:0.10px">Dialog schließen</span></div></div>
</body></html>
